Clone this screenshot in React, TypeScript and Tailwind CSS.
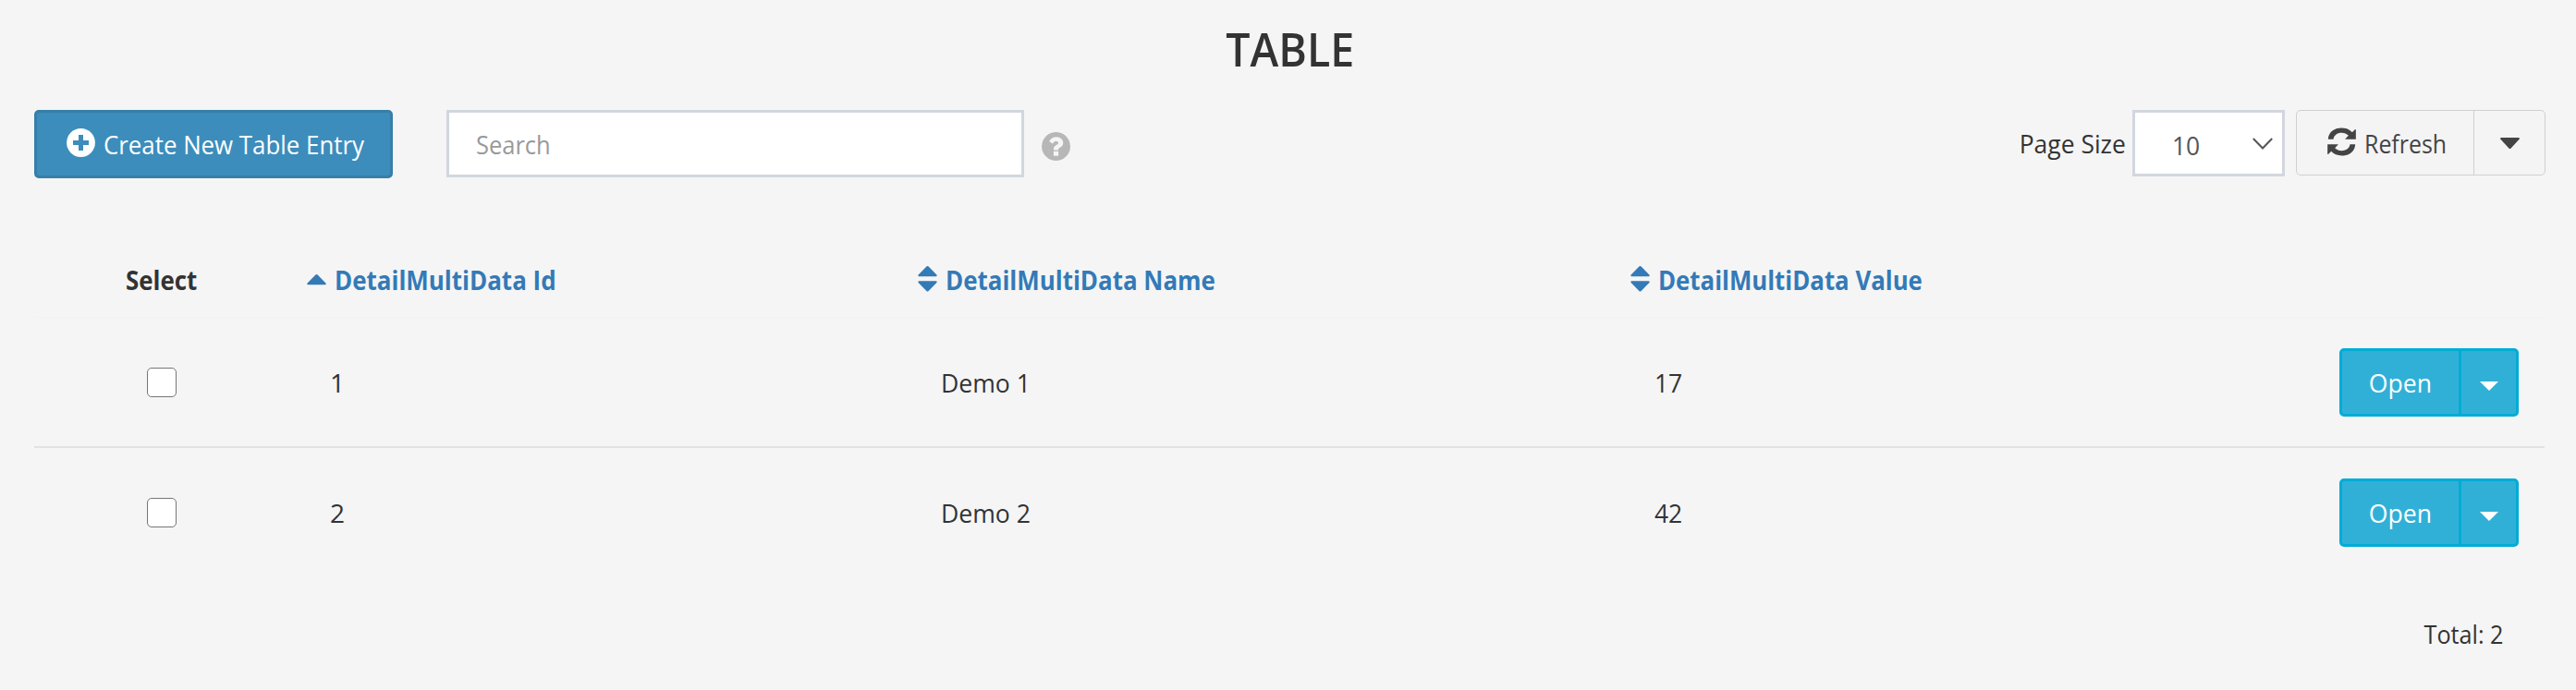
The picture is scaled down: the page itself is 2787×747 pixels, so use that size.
import { FaPlusCircle } from "react-icons/fa";

const rows = [
  { id: "1", name: "Demo 1", value: "17" },
  { id: "2", name: "Demo 2", value: "42" },
];

function OpenButton() {
  return (
    <div className="flex h-[74px] w-[194px] rounded-[5px] border-[3px] border-[#00acd6] bg-[#31b0d7] text-white">
      <button className="h-full w-[126px] text-center">
        <span className="inline-block scale-x-[0.95]">Open</span>
      </button>
      <button className="flex h-full flex-1 items-center justify-center border-l-[3px] border-[#00acd6] pt-[7px]">
        <svg width="20" height="10" viewBox="0 0 20 10" fill="currentColor"><path d="M0 0h20L10 10z" /></svg>
      </button>
    </div>
  );
}

function CreateIcon() {
  return (
    <svg className="-mt-[4px] shrink-0" width="31" height="31" viewBox="0 0 31 31">
      <circle cx="15.5" cy="15.5" r="15.4" fill="#fff" />
      <path d="M13 7h5v6h6v5h-6v6h-5v-6H7v-5h6z" fill="#3c8dbc" />
    </svg>
  );
}

function HelpIcon() {
  return (
    <svg className="mt-[24px] ml-[19px]" width="31" height="31" viewBox="128 128 1536 1536" fill="#b7b7b7">
      <path d="M1024 1376v-192q0-14-9-23t-23-9h-192q-14 0-23 9t-9 23v192q0 14 9 23t23 9h192q14 0 23-9t9-23zm256-672q0-88-55.5-163t-138.5-116-170-41q-243 0-371 213-15 24 8 42l132 100q7 6 19 6 16 0 25-12 53-68 86-92 34-24 86-24 48 0 85.5 26t37.5 59q0 38-20 61t-68 45q-63 28-115.5 86.5t-52.5 125.5v36q0 14 9 23t23 9h192q14 0 23-9t9-23q0-19 21.5-49.5t54.5-49.5q32-18 49-28.5t46-35 44.5-48 28-60.5 12.5-81zm384 192q0 209-103 385.500t-279.500 279.500-385.500 103-385.500-103-279.500-279.500-103-385.500 103-385.500 279.500-279.500 385.500-103 385.500 103 279.500 279.500 103 385.500z" />
    </svg>
  );
}

function RefreshIcon() {
  const half =
    "M55 77C56 54 74 40 99 40C113 40 125 45 133 54L142 45Q145 43 145 47V77H112Q109 77 111 75L121 65C115 59 107 56 99 56C84 56 74 64 72 77Z";
  return (
    <svg className="-mt-[2px]" width="31" height="31" viewBox="52.500 38.500 93 93" fill="currentColor">
      <path d={half} />
      <path d={half} transform="rotate(180 99 85)" />
    </svg>
  );
}

function SortIcon() {
  return (
    <svg className="-mt-[3px]" width="21" height="28" viewBox="0 0 21 28" fill="currentColor">
      <path d="M9.4 .5q1.1-1 2.2 0l8.800 9q.9 1.500-.8 1.700H1.400Q-.3 11 .6 9.500z" />
      <path d="M9.400 27q1.100 1 2.200 0l8.800-9q.9-1.500-.8-1.700H1.400q-1.700.2-.8 1.700z" />
    </svg>
  );
}

export default function App() {
  return (
    <main className="h-[747px] w-[2787px] bg-[#f5f5f5] font-['Open_Sans','Noto_Sans',sans-serif] text-[28px] leading-[40px] text-[#333]">
      <h1 className="flex h-[119px] justify-center pt-[23px] pl-[4px] text-[50px] leading-[60px] font-semibold">
        <span className="scale-x-[0.93]">TABLE</span>
      </h1>
      <div className="flex h-[74px] items-start pr-[33px] pl-[37px]">
        <button className="flex h-[74px] w-[388px] items-center rounded-[5px] border-[3px] border-[#367fa9] bg-[#3c8dbc] pl-[32px] text-white">
          <CreateIcon />
          <span className="ml-[9px] origin-left scale-x-[0.923] whitespace-nowrap">Create New Table Entry</span>
        </button>
        <div className="ml-[58px] flex h-[73px] w-[625px] items-center border-[3px] border-[#d2d6de] bg-white pl-[29px] text-[#999]">
          <span className="origin-left scale-x-[0.91]">Search</span>
        </div>
        <HelpIcon />
        <div className="ml-auto flex">
          <span className="mt-[16px] mr-[7px] origin-right scale-x-[0.945] whitespace-nowrap">Page Size</span>
          <div className="flex h-[72px] w-[165px] items-center justify-between border-[3px] border-[#d2d6de] bg-white pr-[10px] pl-[40px] text-[#555]">
            <span className="origin-left scale-x-[0.944] pt-[3px]">10</span>
            <svg width="22" height="13" viewBox="0 0 22 13" fill="none" stroke="currentColor" strokeWidth="2"><path d="m.8 1 10.200 10.500L21.200 1" /></svg>
          </div>
          <div className="ml-[12px] flex h-[71px] w-[270px] rounded-[5px] border border-[#d0d0d0] bg-[#f4f4f4] text-[#444]">
            <button className="flex h-full w-[192px] items-center border-r border-[#d0d0d0] pl-[33px]">
              <RefreshIcon />
              <span className="ml-[9px] origin-left scale-x-[0.89] pt-px">Refresh</span>
            </button>
            <button className="flex flex-1 items-center justify-center">
              <svg width="21" height="12" viewBox="0 0 21 12" fill="currentColor"><path d="M1.200 0h18.600q1.700.3.800 1.800l-9 9.600q-1.100 1-2.200 0l-9-9.600Q-.5.3 1.200 0z" /></svg>
            </button>
          </div>
        </div>
      </div>
      <div className="mr-[34px] ml-[37px] pt-[67px]">
        <div className="grid h-[84px] grid-cols-[292px_661px_771px_1fr] items-center border-b border-[#f2f2f2] pt-[3px] font-bold">
          <span className="origin-left scale-x-[0.925] pl-[107px]">Select</span>
          <a className="flex items-center pl-[3px] text-[#337ab7]">
            <svg width="21" height="12" viewBox="0 0 21 12" fill="currentColor"><path d="M9.400.6q1.100-1 2.200 0l8.800 9q.9 1.500-.8 1.700H1.400Q-.3 11.100.6 9.600z" /></svg>
            <span className="ml-[9px] origin-left scale-x-[0.927]">DetailMultiData Id</span>
          </a>
          <a className="flex items-center pl-[3px] text-[#337ab7]"><SortIcon /><span className="ml-[9px] origin-left scale-x-[0.926]">DetailMultiData Name</span></a>
          <a className="flex items-center pl-[3px] text-[#337ab7]"><SortIcon /><span className="ml-[9px] origin-left scale-x-[0.922]">DetailMultiData Value</span></a>
        </div>
        {rows.map((r) => (
          <div key={r.id} className="grid h-[141px] grid-cols-[320px_661px_772px_1fr] items-center border-b-2 border-[#e2e2e2] pt-px last:border-transparent">
            <span className="ml-[122px] size-[32px] rounded-[5px] border border-[#767676] bg-white" />
            <span>{r.id}</span>
            <span className="origin-left scale-x-[0.95]">{r.name}</span>
            <div className="flex items-center justify-between pr-[28px]">
              <span className="origin-left scale-x-[0.944]">{r.value}</span>
              <OpenButton />
            </div>
          </div>
        ))}
      </div>
      <div className="flex justify-end pt-[40px] pr-[78px]"><span className="origin-right scale-x-[0.9]">Total: 2</span></div>
    </main>
  );
}
